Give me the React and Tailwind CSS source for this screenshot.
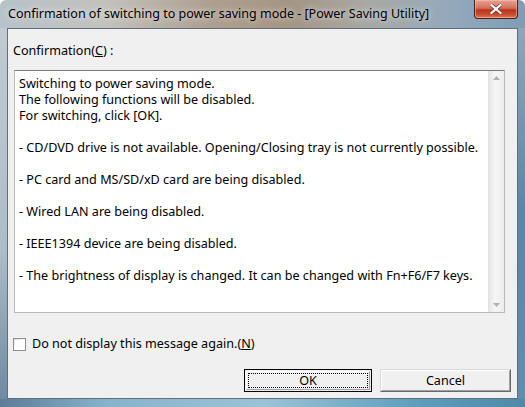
export default function App() {
  const font = { fontFamily: '"Noto Sans", "Open Sans", sans-serif' };
  const lines = [
    "Switching to power saving mode.",
    "The following functions will be disabled.",
    "For switching, click [OK].",
    "",
    "- CD/DVD drive is not available. Opening/Closing tray is not currently possible.",
    "",
    "- PC card and MS/SD/xD card are being disabled.",
    "",
    "- Wired LAN are being disabled.",
    "",
    "- IEEE1394 device are being disabled.",
    "",
    "- The brightness of display is changed. It can be changed with Fn+F6/F7 keys.",
  ];
  return (
    <div className="w-[525px] h-[407px] bg-white" style={font}>
      <div className="w-[525px] h-[407px] flex flex-col rounded-t-[6px] overflow-hidden bg-[linear-gradient(90deg,#b7c2ca_0%,#c3c2bd_20%,#ae9f90_40%,#a49584_55%,#a9a8a4_70%,#95a9bb_85%,#7f9db6_100%)]">
        {/* Title bar */}
        <div className="h-[28px] flex items-start relative">
          <div className="pl-[8px] pt-[6px] text-[12.5px] leading-[16px] text-black [text-shadow:0_0_6px_rgba(255,255,255,0.9)]">
            Confirmation of switching to power saving mode - [Power Saving Utility]
          </div>
          <div className="absolute left-[474px] top-0 w-[44px] h-[19px] rounded-b-[4px] border border-t-0 border-[#4a2018] bg-[linear-gradient(180deg,#e9a493_0%,#d56f58_45%,#b93520_55%,#c94a2f_80%,#e07a54_100%)] flex items-center justify-center shadow-[inset_0_0_0_1px_rgba(255,200,190,0.5)]">
            <svg width="12" height="10" viewBox="0 0 12 10">
              <path d="M1.5 1 L10.5 9 M10.5 1 L1.5 9" stroke="#5a2a20" strokeWidth="3.4" strokeLinecap="square" />
              <path d="M1.5 1 L10.5 9 M10.5 1 L1.5 9" stroke="#ffffff" strokeWidth="2.2" strokeLinecap="square" />
            </svg>
          </div>
        </div>
        <div className="flex flex-1">
          {/* left frame */}
          <div className="w-[7px] bg-[linear-gradient(180deg,#c1cad1_0%,#aebcc7_60%,#6f8aa3_100%)]" />
          {/* client */}
          <div className="w-[511px] h-[371px] border border-[#5f6f7f] bg-[#f0f0f0] flex flex-col text-[12.6px] leading-[16px] text-black">
            <div className="mt-[14px] ml-[5px]">
              Confirmation(<span className="underline">C</span>) :
            </div>
            <div className="mt-[11px] ml-[6px] w-[491px] h-[243px] bg-white border border-[#b9b9b9] border-t-[#7a7a7a] flex">
              <div className="flex-1 pl-[4px] pt-[5px] whitespace-pre">
                {lines.map((l, i) => (
                  <div key={i} className="h-[16px]">{l}</div>
                ))}
              </div>
              <div className="w-[16px] bg-[linear-gradient(90deg,#e6e6e6,#f6f6f6_40%,#ededed)] border-l border-[#e2e2e2] flex flex-col justify-between items-center py-[5px]">
                <svg width="7" height="4" viewBox="0 0 7 4"><path d="M0 4 L3.5 0 L7 4 Z" fill="#b0b0b0" /></svg>
                <svg width="7" height="4" viewBox="0 0 7 4"><path d="M0 0 L3.5 4 L7 0 Z" fill="#b0b0b0" /></svg>
              </div>
            </div>
            <div className="mt-[23px] ml-[5px] flex items-center gap-[6px]">
              <div className="w-[13px] h-[13px] border border-[#8e8f8f] bg-[linear-gradient(135deg,#dcdcdc,#ffffff_60%)] p-[1px]">
                <div className="w-full h-full bg-white" />
              </div>
              <div>
                Do not display this message again.(<span className="underline">N</span>)
              </div>
            </div>
            <div className="mt-[17px] flex justify-end gap-[8px] pr-[6px]">
              <div className="w-[128px] h-[23px] border border-black bg-[#f0f0f0] p-[1px]">
                <div className="w-full h-full border border-white border-r-[#a0a0a0] border-b-[#a0a0a0] p-[1px]">
                  <div className="w-full h-full border border-dotted border-black flex items-center justify-center">
                    OK
                  </div>
                </div>
              </div>
              <div className="w-[131px] h-[23px] border border-[#d8d8d8] border-r-[#6a6a6a] border-b-[#6a6a6a] bg-[#f0f0f0]">
                <div className="w-full h-full border border-white border-r-[#a0a0a0] border-b-[#a0a0a0] flex items-center justify-center">
                  Cancel
                </div>
              </div>
            </div>
          </div>
          {/* right frame */}
          <div className="w-[7px] bg-[linear-gradient(180deg,#8ea6bd_0%,#5a86a8_50%,#5d90ae_100%)]" />
        </div>
        <div className="h-[8px] bg-[linear-gradient(90deg,#5d7c97_0%,#86b2cb_20%,#9bc3d6_50%,#5d9dbb_80%,#4f89a8_100%)]" />
      </div>
    </div>
  );
}
